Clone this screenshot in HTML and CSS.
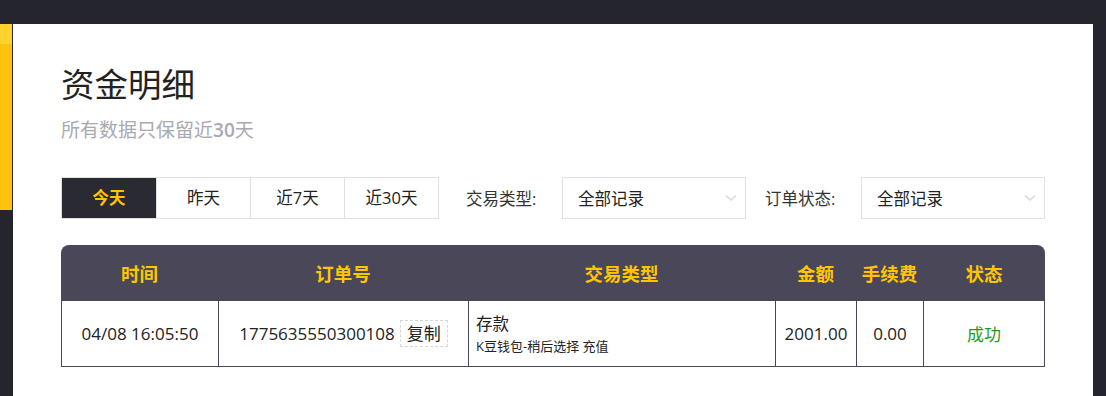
FILE: index.html
```html
<!DOCTYPE html>
<html lang="zh-CN">
<head>
<meta charset="UTF-8" />
<meta name="viewport" content="width=device-width, initial-scale=1" />
<title>资金明细</title>
<link rel="stylesheet" href="styles.css">
</head>
<body>
  <div class="topbar"></div>
  <div class="layout">
    <div class="side">
      <div class="side-yellow"></div>
    </div>

    <div class="panel">
      <h2 class="title">资金明细</h2>
      <p class="subtitle">所有数据只保留近<b>30</b>天</p>

      <!-- 筛选 -->
      <div class="filters">
        <div class="tabs">
          <div class="tab active">今天</div>
          <div class="tab">昨天</div>
          <div class="tab">近7天</div>
          <div class="tab">近30天</div>
        </div>
        <div class="filter">
          <span class="filter-label">交易类型:</span>
          <div class="select">
            <span>全部记录</span>
            <svg class="arrow" width="12" height="8" viewBox="0 0 12 8"><path d="M1 1.5 L6 6 L11 1.5" fill="none" stroke="#d9d9d9" stroke-width="1.6"/></svg>
          </div>
        </div>
        <div class="filter">
          <span class="filter-label">订单状态:</span>
          <div class="select">
            <span>全部记录</span>
            <svg class="arrow" width="12" height="8" viewBox="0 0 12 8"><path d="M1 1.5 L6 6 L11 1.5" fill="none" stroke="#d9d9d9" stroke-width="1.6"/></svg>
          </div>
        </div>
      </div>

      <!-- 记录 -->
      <table class="records">
        <thead>
          <tr>
            <th class="c-time">时间</th>
            <th class="c-order">订单号</th>
            <th class="c-type">交易类型</th>
            <th class="c-amount">金额</th>
            <th class="c-fee">手续费</th>
            <th class="c-status">状态</th>
          </tr>
        </thead>
        <tbody>
          <tr>
            <td>04/08 16:05:50</td>
            <td>1775635550300108<span class="copy-btn">复制</span></td>
            <td class="type-cell">
              <div class="type-main">存款</div>
              <div class="type-sub">K豆钱包-稍后选择 充值</div>
            </td>
            <td>2001.00</td>
            <td>0.00</td>
            <td class="ok">成功</td>
          </tr>
        </tbody>
      </table>
    </div>

    <div class="side-right"></div>
  </div>
</body>
</html>
```

FILE: styles.css
```css
body {
  margin: 0;
  background: #25252e;
  font-family: "Open Sans", "Noto Sans CJK SC", sans-serif;
  color: #333;
  height: 396px;
  overflow: hidden;
}
.topbar {
  height: 24px;
  background: #25252e;
}
.layout {
  display: flex;
  height: 372px;
}
.side {
  width: 13px;
  flex-shrink: 0;
}
.side-yellow {
  width: 12px;
  height: 186px;
  background: linear-gradient(#ffd22e 0, #ffd22e 20px, #ffc20e 20px);
}
.side-right {
  flex: 1;
  background: #25252e;
}
.panel {
  width: 1080px;
  flex-shrink: 0;
  background: #fff;
  padding: 0 0 0 48px;
  box-sizing: border-box;
}
.title {
  margin: 38px 0 0;
  font-size: 33.5px;
  font-weight: 400;
  line-height: 44px;
  color: #222;
}
.subtitle {
  margin: 11px 0 0;
  font-size: 19px;
  line-height: 26px;
  color: #a9a9b1;
}
.subtitle b {
  font-weight: 600;
}
.filters {
  display: flex;
  align-items: center;
  margin-top: 34px;
}
.tabs {
  display: flex;
  border: 1px solid #e0e0e0;
}
.tab {
  width: 93px;
  height: 40px;
  line-height: 40px;
  text-align: center;
  font-size: 16.5px;
  color: #222;
  border-left: 1px solid #e0e0e0;
}
.tab:first-child {
  width: 94px;
  border-left: none;
}
.tab.active {
  background: #2a2a33;
  color: #ffc400;
  font-weight: 700;
}
.filter {
  display: flex;
  align-items: center;
  margin-left: 27px;
}
.filter + .filter {
  margin-left: 19px;
}
.filter-label {
  font-size: 16.5px;
  color: #333;
  width: 96px;
}
.select {
  width: 184px;
  height: 42px;
  box-sizing: border-box;
  border: 1px solid #e0e0e0;
  display: flex;
  align-items: center;
  justify-content: space-between;
  padding: 0 8px 0 15px;
  font-size: 16.5px;
  color: #222;
}
.records {
  margin-top: 26px;
  width: 984px;
  border-collapse: separate;
  border-spacing: 0;
  font-size: 17px;
}
.records th {
  background: #4a4858;
  color: #ffc600;
  font-weight: 700;
  font-size: 18.5px;
  height: 56px;
  padding: 0;
}
.records th:first-child { border-top-left-radius: 8px; }
.records th:last-child { border-top-right-radius: 8px; }
.c-time { width: 157px; }
.c-order { width: 250px; }
.c-type { width: 307px; }
.c-amount { width: 81px; }
.c-fee { width: 67px; }
.records td {
  height: 65px;
  padding: 0;
  text-align: center;
  color: #222;
  border-bottom: 1px solid #4a4858;
  border-left: 1px solid #4a4858;
}
.records td:last-child {
  border-right: 1px solid #4a4858;
}
.copy-btn {
  display: inline-block;
  border: 1px dashed #d6d6d6;
  padding: 0 6px;
  line-height: 25px;
  margin-left: 5px;
}
.type-cell {
  text-align: left !important;
  padding-left: 7px !important;
}
.type-main {
  font-size: 16.5px;
  line-height: 24px;
}
.type-sub {
  font-size: 13px;
  line-height: 20px;
}
.ok {
  color: #1f9a1f !important;
}
```
